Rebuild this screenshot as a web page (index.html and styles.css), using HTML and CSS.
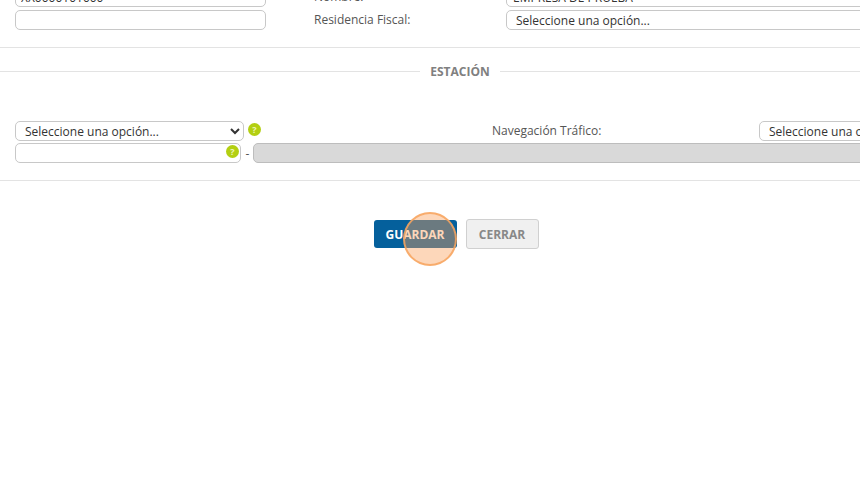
FILE: index.html
```html
<!DOCTYPE html>
<html lang="es">
<head>
<meta charset="utf-8">
<title>Estación</title>
<link rel="stylesheet" href="styles.css">
</head>
<body>
<main class="page">
  <div class="form">
  <section class="top-grid">
    <input class="field field-left" type="text" value="XX0000101000">
    <label class="label">Nombre:</label>
    <input class="field field-right" type="text" value="EMPRESA DE PRUEBA">
    <input class="field field-left" type="text">
    <label class="label">Residencia Fiscal:</label>
    <select class="field select-right"><option>Seleccione una opción...</option></select>
  </section>
  <hr class="rule rule-top">
  <div class="legend"><span class="legend-text">ESTACIÓN</span></div>
  <section class="station">
    <div class="station-row">
      <div class="select-wrap">
        <select class="field select-left"><option>Seleccione una opción...</option></select>
        <span class="help help-side">?</span>
      </div>
      <label class="label label-nav">Navegación Tráfico:</label>
      <select class="field select-nav"><option>Seleccione una opción...</option></select>
    </div>
    <div class="code-row">
      <div class="code-wrap">
        <input class="field code-input" type="text">
        <span class="help help-inner">?</span>
      </div>
      <span class="dash">-</span>
      <input class="field disabled-input" type="text" disabled>
    </div>
  </section>
  <hr class="rule rule-bottom">
  <div class="actions">
    <button class="btn btn-primary" type="button">GUARDAR</button>
    <button class="btn btn-secondary" type="button">CERRAR</button>
    <span class="click-mark"></span>
  </div>
  </div>
</main>
</body>
</html>
```

FILE: styles.css
```css
* { box-sizing: border-box; }
html, body {
  margin: 0;
  height: 100%;
  overflow: hidden;
  background: #fff;
}
body {
  font-family: "Open Sans", "Liberation Sans", sans-serif;
  font-size: 12px;
  color: #555;
}
.page { width: 860px; overflow: hidden; height: 481px; }
.form { width: 920px; margin-top: -13px; }

.field {
  height: 20px;
  border: 1px solid #c8c8c8;
  border-radius: 5px;
  background: #fff;
  font-family: inherit;
  font-size: 12px;
  color: #333;
  margin: 0;
  outline: none;
}
input.field { padding: 0 5px; }

.top-grid {
  display: grid;
  grid-template-columns: 251px 240px 500px;
  row-gap: 3px;
  padding-left: 15px;
  width: 1100px;
  align-items: center;
}
.field-left { width: 251px; }
.label { padding-left: 48px; color: #555; line-height: 20px; }
input.field-right { width: 500px; padding-left: 6px; }
.select-right { width: 500px; padding-left: 9px; appearance: none; }

.rule { border: 0; border-top: 1px solid #e3e3e3; margin: 0; }
.rule-top { margin-top: 17px; }

.legend {
  display: flex;
  align-items: center;
  justify-content: center;
  height: 16px;
  margin-top: 15px;
  gap: 10px;
}
.legend::before, .legend::after {
  content: "";
  flex: 1;
  border-top: 1px solid #e3e3e3;
}
.legend-text {
  font-weight: 700;
  font-size: 12px;
  color: #808080;
  width: 60px;
  text-align: center;
  white-space: nowrap;
}

.station { padding: 42px 0 0 15px; width: 1100px; }
.station-row { display: flex; align-items: center; height: 20px; }
.select-wrap { display: flex; align-items: center; width: 477px; gap: 4px; }
.select-left { width: 229px; padding-left: 5px; }
.label-nav { padding: 0; width: 267px; line-height: 20px; }
.select-nav { width: 300px; padding-left: 9px; appearance: none; }

.help {
  display: flex;
  align-items: center;
  justify-content: center;
  width: 13px;
  height: 13px;
  border-radius: 50%;
  background: #b3cf12;
  color: #eef5bb;
  font-size: 9px;
  font-weight: 700;
  line-height: 1;
}
.code-row { display: flex; align-items: center; margin-top: 2px; }
.code-wrap { position: relative; width: 226px; }
.code-input { width: 226px; display: block; }
.help-inner { position: absolute; right: 2px; top: 2px; }
.help-side { margin-top: -3px; }
.dash { width: 12px; padding-left: 1px; text-align: center; color: #555; }
.disabled-input { width: 800px; background: #d9d9d9; border-color: #bdbdbd; }

.rule-bottom { margin-top: 17px; }

.actions {
  position: relative;
  display: flex;
  justify-content: center;
  align-items: center;
  gap: 9px;
  margin-top: 38px;
  padding-right: 8px;
  height: 30px;
}
.btn {
  font-family: inherit;
  font-size: 12px;
  font-weight: 700;
  border-radius: 3px;
  padding: 0;
}
.btn-primary {
  width: 83px;
  height: 28px;
  background: #05609c;
  border: 0;
  color: #fff;
}
.btn-secondary {
  width: 73px;
  height: 30px;
  background: #f0f0f0;
  border: 1px solid #d0d0d0;
  color: #888;
}
.click-mark {
  position: absolute;
  left: 403px;
  top: -7px;
  width: 54px;
  height: 54px;
  border-radius: 50%;
  background: rgba(250, 160, 90, 0.42);
  border: 2px solid rgba(248, 165, 95, 0.85);
}
```
